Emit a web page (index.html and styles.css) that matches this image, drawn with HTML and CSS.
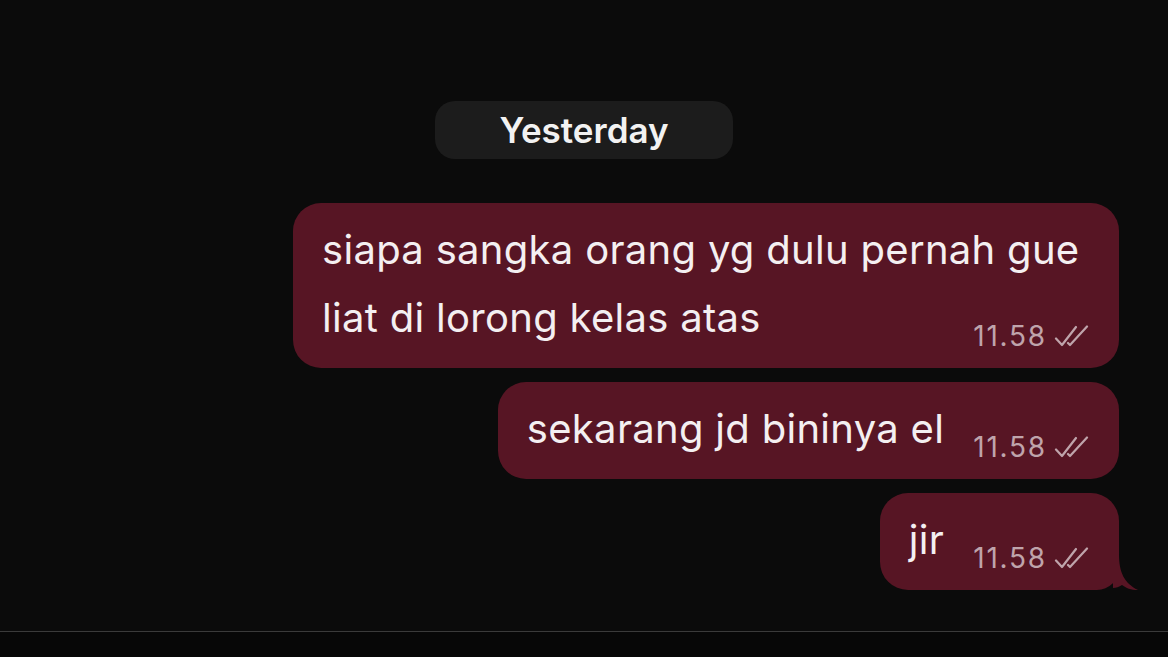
FILE: index.html
```html
<!DOCTYPE html>
<html lang="id">
<head>
    <title>Chat</title>
    <link rel="stylesheet" href="styles.css">
</head>
<body>
    <div class="chat">
        <div class="day"><span class="day-label">Yesterday</span></div>

        <div class="msg">
            siapa sangka orang yg dulu pernah gue liat di lorong kelas atas<span class="meta"><span class="time">11.58</span><svg class="ticks" viewBox="0 0 36 22"><path d="M2 13.5 L8 20 L22 2 M14 18 L16 20 L33 1.5"/></svg></span>
        </div>

        <div class="msg">
            sekarang jd bininya el<span class="meta"><span class="time">11.58</span><svg class="ticks" viewBox="0 0 36 22"><path d="M2 13.5 L8 20 L22 2 M14 18 L16 20 L33 1.5"/></svg></span>
        </div>

        <div class="msg msg-last">
            jir<span class="meta"><span class="time">11.58</span><svg class="ticks" viewBox="0 0 36 22"><path d="M2 13.5 L8 20 L22 2 M14 18 L16 20 L33 1.5"/></svg></span>
            <svg class="tail" viewBox="0 0 26 36"><path d="M0 0 L6 0 C6 18 11 29 25 36 C18 36 13 34 9 31 C6 33 3 34 0 34 Z"/></svg>
        </div>
    </div>
    <div class="composer"></div>
</body>
</html>
```

FILE: styles.css
```css
body{
    margin: 0;
    background-color: #0b0b0b;
    font-family: Inter, "Noto Sans", sans-serif;
    color: #f4eff1;
}
.chat{
    height: 631px;
    box-sizing: border-box;
    padding-top: 101px;
    display: flex;
    flex-direction: column;
    align-items: flex-end;
}
.day{
    align-self: center;
    margin-bottom: 44px;
}
.day-label{
    display: block;
    height: 58px;
    line-height: 58px;
    padding: 0 64px;
    border-radius: 20px;
    background-color: #1c1c1c;
    font-size: 35px;
    font-weight: 600;
    color: #f2f2f2;
}
.msg{
    position: relative;
    display: flow-root;
    box-sizing: border-box;
    max-width: 826px;
    margin: 0 49px 14px 0;
    padding: 13px 29px 2px;
    border-radius: 28px;
    background-color: #571524;
    font-size: 40px;
    line-height: 68px;
    letter-spacing: 0.3px;
}
.meta{
    float: right;
    display: flex;
    align-items: center;
    gap: 7px;
    height: 60px;
    margin: 22px 0 0 29px;
    color: #bfa4ab;
    font-size: 28px;
    letter-spacing: 1.8px;
}
.ticks{
    width: 36px;
    height: 22px;
}
.ticks path{
    fill: none;
    stroke: #bfa4ab;
    stroke-width: 2.2;
    stroke-linecap: round;
    stroke-linejoin: round;
}
.msg-last{
    border-bottom-right-radius: 22px;
}
.tail{
    position: absolute;
    right: -20px;
    bottom: 0;
    width: 26px;
    height: 36px;
}
.tail path{
    fill: #571524;
}
.composer{
    height: 26px;
    border-top: 1px solid #3a3a3a;
    background-color: #070707;
}
```
